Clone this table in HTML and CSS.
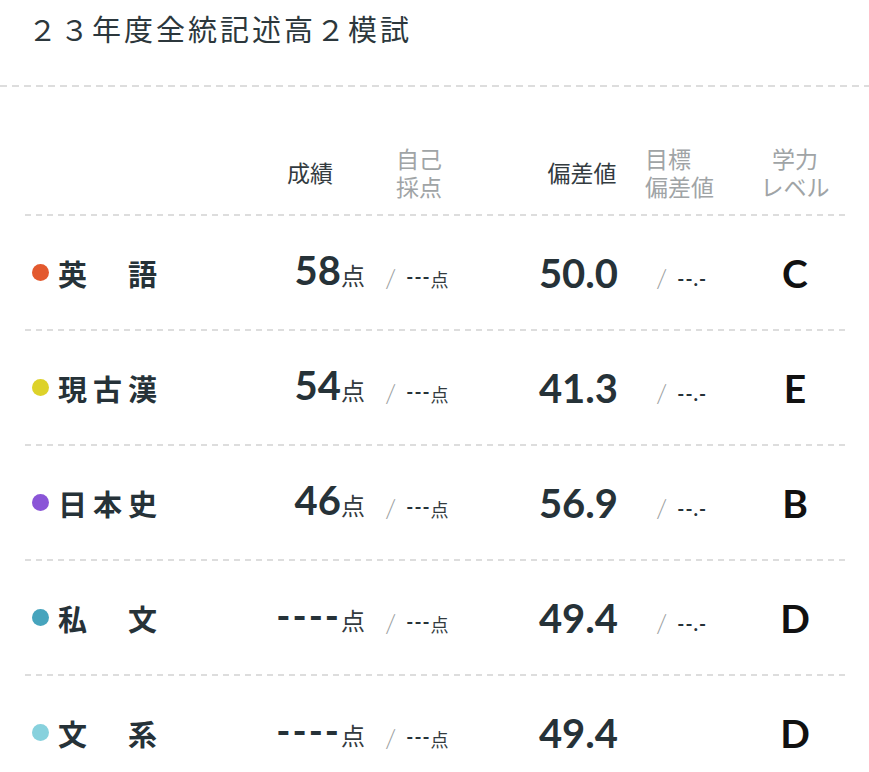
FILE: index.html
```html
<!DOCTYPE html>
<html lang="ja">
<head>
<meta charset="utf-8">
<title>２３年度全統記述高２模試</title>
<link rel="stylesheet" href="styles.css">
</head>
<body>
<div class="page">
  <h1 class="title">２３年度全統記述高２模試</h1>
  <div class="rule-top"></div>

  <div class="table">
    <div class="grid head">
      <div class="h h-name"></div>
      <div class="h h-score dark">成績</div>
      <div class="h h-self"><span class="hl">自己</span><span class="hl">採点</span></div>
      <div class="h h-dev dark">偏差値</div>
      <div class="h h-target"><span class="hl">目標</span><span class="hl">偏差値</span></div>
      <div class="h h-grade"><span class="hl">学力</span><span class="hl">レベル</span></div>
    </div>
    <div class="rule"></div>

    <div class="grid row">
      <div class="name"><span class="dot c-en"></span><span class="subj">英　語</span></div>
      <div class="score"><span class="num">58</span><span class="unit">点</span></div>
      <div class="self"><span class="slash">/</span><span class="dash">---</span><span class="sunit">点</span></div>
      <div class="dev">50.0</div>
      <div class="target"><span class="slash">/</span><span class="tdash">--.-</span></div>
      <div class="grade">C</div>
    </div>
    <div class="rule"></div>

    <div class="grid row">
      <div class="name"><span class="dot c-jp"></span><span class="subj">現古漢</span></div>
      <div class="score"><span class="num">54</span><span class="unit">点</span></div>
      <div class="self"><span class="slash">/</span><span class="dash">---</span><span class="sunit">点</span></div>
      <div class="dev">41.3</div>
      <div class="target"><span class="slash">/</span><span class="tdash">--.-</span></div>
      <div class="grade">E</div>
    </div>
    <div class="rule"></div>

    <div class="grid row">
      <div class="name"><span class="dot c-hist"></span><span class="subj">日本史</span></div>
      <div class="score"><span class="num">46</span><span class="unit">点</span></div>
      <div class="self"><span class="slash">/</span><span class="dash">---</span><span class="sunit">点</span></div>
      <div class="dev">56.9</div>
      <div class="target"><span class="slash">/</span><span class="tdash">--.-</span></div>
      <div class="grade">B</div>
    </div>
    <div class="rule"></div>

    <div class="grid row">
      <div class="name"><span class="dot c-pri"></span><span class="subj">私　文</span></div>
      <div class="score"><span class="num nodata">----</span><span class="unit">点</span></div>
      <div class="self"><span class="slash">/</span><span class="dash">---</span><span class="sunit">点</span></div>
      <div class="dev">49.4</div>
      <div class="target"><span class="slash">/</span><span class="tdash">--.-</span></div>
      <div class="grade">D</div>
    </div>
    <div class="rule"></div>

    <div class="grid row">
      <div class="name"><span class="dot c-lit"></span><span class="subj">文　系</span></div>
      <div class="score"><span class="num nodata">----</span><span class="unit">点</span></div>
      <div class="self"><span class="slash">/</span><span class="dash">---</span><span class="sunit">点</span></div>
      <div class="dev">49.4</div>
      <div class="target"></div>
      <div class="grade">D</div>
    </div>
  </div>
</div>
</body>
</html>
```

FILE: styles.css
```css
html, body {
  margin: 0;
  padding: 0;
  background: #ffffff;
}

body {
  font-family: "Noto Sans CJK JP", "Noto Sans", sans-serif;
  color: #263238;
  width: 869px;
  overflow: hidden;
}

.page {
  width: 869px;
}

.title {
  margin: 0;
  padding: 10px 0 0 28px;
  font-size: 29px;
  font-weight: 400;
  line-height: 36px;
  letter-spacing: 3px;
  color: #2c373c;
}

.rule-top {
  margin-top: 39px;
  height: 2px;
  background: repeating-linear-gradient(to right, #dddddd 0 7px, transparent 7px 12px);
}

.table {
  margin-left: 25px;
  width: 820px;
}

.grid {
  display: grid;
  grid-template-columns: 240px 105px 160px 104px 111px 100px;
  align-items: center;
}

.head {
  margin-top: 57px;
  height: 56px;
  margin-bottom: 14px;
}

.h {
  font-size: 23px;
  line-height: 28px;
  color: #a0a4a6;
  white-space: nowrap;
}

.hl {
  display: block;
  height: 28px;
}

.h.dark {
  color: #333b3f;
}

.h-score {
  text-align: center;
  padding-right: 15px;
}

.h-self {
  padding-left: 26px;
}

.h-dev {
  text-align: center;
}

.h-target {
  padding-left: 11px;
}

.h-grade {
  text-align: center;
}

.rule {
  height: 2px;
  background: repeating-linear-gradient(to right, #dddddd 0 6px, transparent 6px 11px);
}

.row {
  height: 113px;
}

.name {
  display: flex;
  align-items: center;
  padding-left: 7px;
}

.dot {
  width: 17px;
  height: 17px;
  border-radius: 50%;
  flex: none;
  margin-right: 9px;
}

.c-en { background: #e3592e; }
.c-jp { background: #ddd22a; }
.c-hist { background: #8a55d7; }
.c-pri { background: #46a4bd; }
.c-lit { background: #87d1dd; }

.subj {
  font-size: 29px;
  font-weight: 700;
  letter-spacing: 6px;
  line-height: 40px;
  color: #263238;
}

.score {
  text-align: right;
  padding-right: 5px;
  font-family: "Lato", "Liberation Sans", sans-serif;
  font-size: 40px;
  line-height: 40px;
  white-space: nowrap;
}

.num {
  font-weight: 700;
  color: #263238;
}

.num.nodata {
  letter-spacing: 2px;
  font-size: 38px;
}

.unit {
  font-family: "Noto Sans CJK JP", sans-serif;
  font-size: 24px;
  font-weight: 400;
  color: #333b3f;
}

.self,
.target {
  font-family: "Lato", "Liberation Sans", sans-serif;
  font-size: 40px;
  line-height: 40px;
  white-space: nowrap;
}

.self {
  padding-left: 15px;
}

.target {
  padding-left: 22px;
}

.slash {
  font-size: 26px;
  font-weight: 300;
  color: #9a9ea0;
  margin-right: 10px;
  position: relative;
  top: 4px;
}

.dash {
  font-size: 19px;
  font-weight: 700;
  letter-spacing: 1px;
  color: #263238;
}

.sunit {
  font-family: "Noto Sans CJK JP", sans-serif;
  font-size: 18px;
  color: #333b3f;
  position: relative;
  top: 3px;
}

.tdash {
  font-size: 19px;
  font-weight: 700;
  letter-spacing: 1px;
  color: #263238;
  position: relative;
  top: 2px;
}

.dev {
  text-align: right;
  padding-right: 16px;
  font-family: "Lato", "Liberation Sans", sans-serif;
  font-size: 40px;
  font-weight: 700;
  line-height: 40px;
  color: #263238;
}

.grade {
  text-align: center;
  font-family: "Lato", "Liberation Sans", sans-serif;
  font-size: 39px;
  font-weight: 700;
  line-height: 40px;
  color: #111111;
}
```
